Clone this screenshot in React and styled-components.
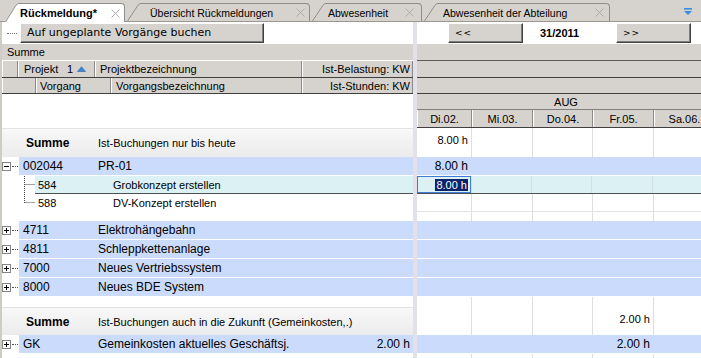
import React from 'react';
import styled, { createGlobalStyle } from 'styled-components';

const GRAY = '#d6d3ce';
const BLUE = '#cadbfb';
const CYAN = '#dbf1f3';

const Global = createGlobalStyle`
  html, body { margin: 0; padding: 0; background: #fff; }
  body { font-family: "Liberation Sans", Arial, sans-serif; font-size: 11px; color: #000; }
  #root { width: 701px; height: 358px; overflow: hidden; }
`;

const Screen = styled.div`
  width: 701px;
  height: 358px;
  display: flex;
  flex-direction: column;
  overflow: hidden;
  background: #fff;
`;

/* ---------- Tabs ---------- */
const TabBar = styled.div`
  height: 22px;
  box-sizing: border-box;
  background: ${GRAY};
  border-bottom: 1px solid #9a9891;
  display: flex;
  align-items: flex-end;
  padding-left: 5px;
  gap: 2px;
  flex: none;
`;

const TabWrap = styled.div`
  display: flex;
  height: ${(p) => (p.$active ? 19 : 18)}px;
  margin-bottom: ${(p) => (p.$active ? -1 : 0)}px;
  position: relative;
`;

const Slant = styled.svg`
  display: block;
  flex: none;
`;

const TabBody = styled.div`
  width: ${(p) => p.$w}px;
  box-sizing: border-box;
  background: ${(p) => (p.$active ? '#fff' : GRAY)};
  border-top: 1px solid #8e8e8e;
  border-right: 1px solid #8e8e8e;
  border-top-right-radius: 4px;
  display: flex;
  align-items: center;
  padding-left: ${(p) => p.$pl}px;
  padding-right: ${(p) => p.$pr}px;
  font-size: ${(p) => (p.$active ? 11 : 10.5)}px;
  font-weight: ${(p) => (p.$active ? 700 : 400)};
  white-space: nowrap;
`;

const Close = styled.svg`
  margin-left: auto;
  flex: none;
  display: block;
`;

const MenuIcon = styled.svg`
  align-self: flex-start;
  margin: 8px 9px 0 auto;
  display: block;
`;

function Tab({ label, active, w, pl, pr = 4 }) {
  const h = active ? 19 : 18;
  return (
    <TabWrap $active={active}>
      <Slant width="14" height={h} viewBox={`0 0 14 ${h}`}>
        <path d={`M0,${h} L11,2 Q12.5,0 14,0 L14,${h} Z`} fill={active ? '#fff' : GRAY} />
        <path d={`M0.5,${h} L11,2.3 Q12.4,0.5 14,0.5`} fill="none" stroke="#8e8e8e" strokeWidth="1" />
      </Slant>
      <TabBody $w={w} $pl={pl} $pr={pr} $active={active}>
        {label}
        <Close width="9" height="9" viewBox="0 0 9 9">
          <path d="M0.5,0.5 L8.5,8.5 M8.5,0.5 L0.5,8.5" stroke="#acacac" strokeWidth="1" />
        </Close>
      </TabBody>
    </TabWrap>
  );
}

/* ---------- Panes ---------- */
const Main = styled.div`
  flex: 1;
  display: flex;
  background: #cfcbc5;
  padding-left: 2px;
  min-height: 0;
`;

const LeftPane = styled.div`
  width: 411px;
  flex: none;
  background: #fff;
  display: flex;
  flex-direction: column;
`;

const Splitter = styled.div`
  width: 4px;
  flex: none;
  background: #e3e0ea;
`;

const RightPane = styled.div`
  flex: 1;
  background: #fff;
  display: flex;
  flex-direction: column;
  overflow: hidden;
  min-width: 0;
`;

const Toolbar = styled.div`
  height: 22px;
  flex: none;
  display: flex;
  align-items: center;
  padding-left: ${(p) => p.$pl}px;
  box-sizing: border-box;
`;

const Dots = styled.span`
  width: 10px;
  border-top: 1px dotted #707070;
  flex: none;
`;

const Button = styled.button`
  width: ${(p) => p.$w}px;
  height: 20px;
  margin-left: ${(p) => p.$ml || 0}px;
  box-sizing: border-box;
  background: ${GRAY};
  border: none;
  border-top: 1px solid #fff;
  border-left: 1px solid #fff;
  border-right: 1px solid #404040;
  border-bottom: 1px solid #404040;
  box-shadow: inset -1px -1px 0 #808080;
  font-family: "DejaVu Sans", sans-serif;
  font-size: ${(p) => p.$fs || 11}px;
  letter-spacing: ${(p) => p.$ls || 0}px;
  text-align: left;
  padding: 0 0 1px 6px;
  color: #000;
  flex: none;
`;

const WeekLabel = styled.div`
  width: 93px;
  flex: none;
  box-sizing: border-box;
  padding-left: 17px;
  font-weight: 700;
  font-size: 11px;
`;

const GroupBar = styled.div`
  height: 17px;
  flex: none;
  box-sizing: border-box;
  background: ${GRAY};
  border-bottom: 1px solid ${(p) => (p.$dark ? '#5a5a5a' : '#fff')};
  display: flex;
  align-items: center;
  padding-left: 5px;
  font-size: 11px;
`;

const HeaderRow = styled.div`
  height: ${(p) => p.$h}px;
  flex: none;
  box-sizing: border-box;
  background: ${GRAY};
  border-bottom: 1px solid #404040;
  display: flex;
  overflow: hidden;
`;

const HeaderCell = styled.div`
  width: ${(p) => p.$w}px;
  flex: none;
  box-sizing: border-box;
  border-left: 1px solid #fff;
  border-right: 1px solid #8a8a8a;
  display: flex;
  align-items: center;
  justify-content: ${(p) => p.$justify || 'flex-start'};
  padding-left: ${(p) => p.$pl || 0}px;
  padding-right: ${(p) => p.$pr || 0}px;
  font-size: 11px;
  white-space: nowrap;
`;

const SortMark = styled.span`
  margin-left: auto;
  display: flex;
  align-items: center;
  gap: 2px;
`;

const Spacer = styled.div`
  height: ${(p) => p.$h}px;
  flex: none;
`;

/* ---------- Left body rows ---------- */
const SumRow = styled.div`
  height: ${(p) => p.$h}px;
  flex: none;
  box-sizing: border-box;
  border-top: 1px solid #e2e2e2;
  background: linear-gradient(to bottom, #f8f8f8, #ebebeb);
  display: flex;
  align-items: center;
  padding-left: 24px;
`;

const SumLabel = styled.span`
  width: 72px;
  flex: none;
  font-weight: 700;
  font-size: 12px;
`;

const SumText = styled.span`
  font-size: 11px;
  white-space: nowrap;
`;

const LRow = styled.div`
  height: ${(p) => p.$h}px;
  flex: none;
  display: flex;
`;

const Gutter = styled.div`
  width: ${(p) => p.$w}px;
  flex: none;
  display: flex;
  align-items: center;
`;

const TreeDots = styled.span`
  width: 6px;
  margin-left: 1px;
  border-top: 1px dotted #555;
`;

const RowBody = styled.div`
  flex: 1;
  display: flex;
  align-items: center;
  box-sizing: border-box;
  background: ${(p) => p.$bg};
  border-bottom: 1px solid ${(p) => p.$line};
  font-size: ${(p) => p.$fs}px;
  white-space: nowrap;
`;

const Code = styled.span`
  width: ${(p) => p.$w}px;
  padding-left: ${(p) => p.$pl}px;
  box-sizing: border-box;
  flex: none;
`;

const Name = styled.span`
  flex: 1;
`;

const Value = styled.span`
  width: 111px;
  flex: none;
  box-sizing: border-box;
  text-align: right;
  padding-right: 3px;
`;

function Expander({ open }) {
  return (
    <svg width="9" height="9" viewBox="0 0 9 9" style={{ display: 'block', flex: 'none' }}>
      <rect x="0.5" y="0.5" width="8" height="8" fill="#fff" stroke="#848484" />
      <path d="M2,4.5 H7" stroke="#000" />
      {!open && <path d="M4.5,2 V7" stroke="#000" />}
    </svg>
  );
}

function ProjRow({ code, name, value, open }) {
  return (
    <LRow $h={19}>
      <Gutter $w={17}>
        <Expander open={open} />
        <TreeDots />
      </Gutter>
      <RowBody $bg={BLUE} $line="#fff" $fs={12}>
        <Code $w={79} $pl={4}>{code}</Code>
        <Name>{name}</Name>
        {value && <Value>{value}</Value>}
      </RowBody>
    </LRow>
  );
}

function ChildRow({ code, name, last, selected }) {
  return (
    <LRow $h={18}>
      <Gutter $w={33}>
        <svg width="33" height="18" viewBox="0 0 33 18" style={{ display: 'block' }}>
          <path
            d={`M22.5,0 V${last ? 9 : 18} M22.5,8.5 H33`}
            stroke="#444"
            strokeDasharray="1 1"
            fill="none"
          />
        </svg>
      </Gutter>
      <RowBody $bg={selected ? CYAN : '#fff'} $line={selected ? '#505050' : '#fff'} $fs={11}>
        <Code $w={78} $pl={3}>{code}</Code>
        <Name>{name}</Name>
      </RowBody>
    </LRow>
  );
}

/* ---------- Right side ---------- */
const days = [
  { label: 'Di.02.', w: 55 },
  { label: 'Mi.03.', w: 61 },
  { label: 'Do.04.', w: 60 },
  { label: 'Fr.05.', w: 61 },
  { label: 'Sa.06.', w: 61 },
];

const MonthBar = styled.div`
  height: 16px;
  flex: none;
  box-sizing: border-box;
  background: ${GRAY};
  border-bottom: 1px solid #808080;
  display: flex;
  align-items: center;
  justify-content: center;
  font-size: 11px;
  width: 298px;
`;

const DayRow = styled.div`
  height: 18px;
  flex: none;
  box-sizing: border-box;
  background: ${GRAY};
  border-bottom: 1px solid #404040;
  display: flex;
  width: 298px;
`;

const DayCell = styled.div`
  width: ${(p) => p.$w}px;
  flex: none;
  box-sizing: border-box;
  border-left: 1px solid #fff;
  border-right: 1px solid #8a8a8a;
  display: flex;
  align-items: center;
  justify-content: center;
  font-size: 11px;
`;

const RRow = styled.div`
  height: ${(p) => p.$h}px;
  flex: none;
  box-sizing: border-box;
  display: flex;
  width: 298px;
  background: ${(p) => p.$bg};
  border-bottom: ${(p) => (p.$line ? `1px solid ${p.$line}` : 'none')};
`;

const RCell = styled.div`
  width: ${(p) => p.$w}px;
  flex: none;
  box-sizing: border-box;
  border-right: 1px solid ${(p) => p.$grid};
  display: flex;
  align-items: center;
  justify-content: flex-end;
  padding: 0 3px ${(p) => p.$pb || 0}px 0;
  font-size: ${(p) => p.$fs}px;
  box-shadow: ${(p) => (p.$sel ? 'inset 0 0 0 1px #3f7bd4' : 'none')};
  margin-right: ${(p) => (p.$sel ? -1 : 0)}px;
  position: relative;
`;

const Selected = styled.span`
  background: #0a246a;
  color: #fff;
  padding: 0 1px;
`;

const kinds = {
  sum: { bg: '#fff', grid: '#dedede', line: null, pb: 5 },
  blue: { bg: BLUE, grid: 'transparent', line: '#fff', pb: 0 },
  cyan: { bg: CYAN, grid: '#cfe2e4', line: '#505050', pb: 0 },
  white: { bg: '#fff', grid: '#dedede', line: '#e2e2e2', pb: 0 },
  gap: { bg: '#fff', grid: '#dedede', line: null, pb: 0 },
};

const rightRows = [
  { kind: 'sum', h: 29, vals: { 0: '8.00 h' } },
  { kind: 'blue', h: 19, vals: { 0: '8.00 h' }, fs: 12 },
  { kind: 'cyan', h: 18, vals: { 0: '8.00 h' }, sel: 0 },
  { kind: 'white', h: 18 },
  { kind: 'gap', h: 9 },
  { kind: 'blue', h: 19 },
  { kind: 'blue', h: 19 },
  { kind: 'blue', h: 19 },
  { kind: 'blue', h: 19 },
  { kind: 'gap', h: 10 },
  { kind: 'sum', h: 28, vals: { 3: '2.00 h' } },
  { kind: 'blue', h: 19, vals: { 3: '2.00 h' }, fs: 12 },
  { kind: 'gap', h: 10 },
];

function RightRow({ row }) {
  const k = kinds[row.kind];
  return (
    <RRow $h={row.h} $bg={k.bg} $line={k.line}>
      {days.map((d, i) => {
        const v = row.vals && row.vals[i];
        const sel = row.sel === i;
        return (
          <RCell key={d.label} $w={d.w} $grid={k.grid} $fs={row.fs || 11} $pb={k.pb} $sel={sel}>
            {v && (sel ? <Selected>{v}</Selected> : v)}
          </RCell>
        );
      })}
    </RRow>
  );
}

export default function App() {
  return (
    <>
      <Global />
      <Screen>
        <TabBar>
          <Tab label="Rückmeldung*" active w={106} pl={1} />
          <Tab label="Übersicht Rückmeldungen" w={169} pl={9} />
          <Tab label="Abwesenheit" w={96} pl={2} pr={7} />
          <Tab label="Abwesenheit der Abteilung" w={172} pl={5} pr={5} />
          <MenuIcon width="8" height="7" viewBox="0 0 8 7">
            <rect x="0" y="0" width="8" height="1.6" fill="#3a8ee2" />
            <path d="M0,3 H8 L4,7 Z" fill="#3a8ee2" />
          </MenuIcon>
        </TabBar>
        <Main>
          <LeftPane>
            <Toolbar $pl={5}>
              <Dots />
              <Button $w={244} $ml={3}>Auf ungeplante Vorgänge buchen</Button>
            </Toolbar>
            <GroupBar>Summe</GroupBar>
            <HeaderRow $h={17}>
              <HeaderCell $w={16} />
              <HeaderCell $w={77} $pl={5} $pr={8}>
                Projekt
                <SortMark>
                  1
                  <svg width="9" height="6" viewBox="0 0 9 6" style={{ display: 'block', marginLeft: 2 }}>
                    <path d="M0.5,5.5 L4.5,0.8 L8.5,5.5 Z" fill="#3b86d8" stroke="#2a62a8" strokeWidth="0.6" />
                  </svg>
                </SortMark>
              </HeaderCell>
              <HeaderCell $w={207} $pl={4}>Projektbezeichnung</HeaderCell>
              <HeaderCell $w={111} $pr={2} $justify="flex-end">Ist-Belastung: KW</HeaderCell>
            </HeaderRow>
            <HeaderRow $h={16}>
              <HeaderCell $w={34} />
              <HeaderCell $w={75} $pl={3}>Vorgang</HeaderCell>
              <HeaderCell $w={191} $pl={4}>Vorgangsbezeichnung</HeaderCell>
              <HeaderCell $w={111} $pr={2} $justify="flex-end">Ist-Stunden: KW</HeaderCell>
            </HeaderRow>
            <Spacer $h={34} />
            <SumRow $h={29}>
              <SumLabel>Summe</SumLabel>
              <SumText>Ist-Buchungen nur bis heute</SumText>
            </SumRow>
            <ProjRow open code="002044" name="PR-01" />
            <ChildRow selected code="584" name="Grobkonzept erstellen" />
            <ChildRow last code="588" name="DV-Konzept erstellen" />
            <Spacer $h={9} />
            <ProjRow code="4711" name="Elektrohängebahn" />
            <ProjRow code="4811" name="Schleppkettenanlage" />
            <ProjRow code="7000" name="Neues Vertriebssystem" />
            <ProjRow code="8000" name="Neues BDE System" />
            <Spacer $h={10} />
            <SumRow $h={28}>
              <SumLabel>Summe</SumLabel>
              <SumText>Ist-Buchungen auch in die Zukunft (Gemeinkosten,.)</SumText>
            </SumRow>
            <ProjRow code="GK" name="Gemeinkosten aktuelles Geschäftsj." value="2.00 h" />
          </LeftPane>
          <Splitter />
          <RightPane>
            <Toolbar $pl={31}>
              <Button $w={75} $fs={9} $ls={1}>&lt;&lt;</Button>
              <WeekLabel>31/2011</WeekLabel>
              <Button $w={75} $fs={9} $ls={1}>&gt;&gt;</Button>
            </Toolbar>
            <GroupBar $dark />
            <HeaderRow $h={17} />
            <HeaderRow $h={16} />
            <MonthBar>AUG</MonthBar>
            <DayRow>
              {days.map((d) => (
                <DayCell key={d.label} $w={d.w}>{d.label}</DayCell>
              ))}
            </DayRow>
            {rightRows.map((r, i) => (
              <RightRow key={i} row={r} />
            ))}
          </RightPane>
        </Main>
      </Screen>
    </>
  );
}
